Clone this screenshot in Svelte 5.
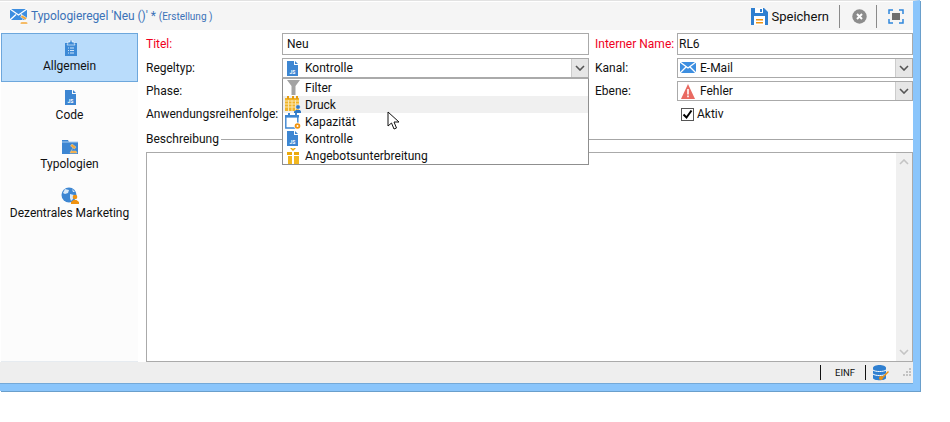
<script>
	let navItems = [
		{ label: "Allgemein", icon: "clip", active: true },
		{ label: "Code", icon: "js" },
		{ label: "Typologien", icon: "folder" },
		{ label: "Dezentrales Marketing", icon: "globe" }
	];
	let options = [
		{ label: "Filter", icon: "filter" },
		{ label: "Druck", icon: "calperson", hover: true },
		{ label: "Kapazität", icon: "calgear" },
		{ label: "Kontrolle", icon: "js" },
		{ label: "Angebotsunterbreitung", icon: "gift" }
	];
</script>

{#snippet icon(name)}
	<svg class="icon" width="18" height="17" viewBox="0 0 18 17">
		{#if name === "clip"}
			<path d="M4 3h12v13H4z" fill="#3d8ad6" />
			<path d="M7 3V2h2V0h2v2h2v1l1 2H6z" fill="#3d8ad6" stroke="#fff" stroke-width=".6" />
			<path d="M7 8h1M9 8h4M7 10.500h1M9 10.500h4M7 13h1M9 13h4" stroke="#cfe4f8" stroke-width="1" />
		{:else if name === "js"}
			<path d="M4 1h7v4h4v11H4z" fill="#3d86d2" />
			<path d="M12 1l3 3h-3z" fill="#3d86d2" />
			<text x="6.500" y="14" class="js">JS</text>
		{:else if name === "folder"}
			<path d="M1 2h6l1 2h9v12H1z" fill="#3d86d2" />
			<path d="M1 4h16" stroke="#a9cdf0" stroke-width="1" />
			<path d="M9 15h7l-1-2h-5zM11 6l4 3-1.500 2-4-3zM12 10l-2 3" fill="#f2a535" stroke="#f7d7a0" stroke-width=".5" />
		{:else if name === "globe"}
			<circle cx="8" cy="8" r="7.500" fill="#3d86d2" />
			<path d="M4 2l4 1-1 3-3 1-2-1zM9 7l4 1-1 4-2 2-1-3zM11 2l3 3-2 0z" fill="#d9e9f8" />
			<circle cx="14" cy="10" r="2.300" fill="#f0920f" />
			<path d="M10 17v-2l2.500-2h3l2.500 2v2z" fill="#f0920f" />
		{:else if name === "filter"}
			<path d="M4 1h13l-4.500 6v9h-4V7z" fill="#a3a3a3" />
		{:else if name === "calperson"}
			<path d="M2 2h14v13H2z" fill="#f0b429" />
			<path d="M4 0h2v3H4zM9 0h2v3H9zM13 0h2v3h-2z" fill="#e49b12" />
			<path d="M2 5h14M2 8h14M2 11h14M5.500 4v11M9 4v11M12.500 4v11" stroke="#fbe6ae" stroke-width="1" />
			<circle cx="15" cy="11" r="2.300" fill="#2f78c4" stroke="#fff" stroke-width=".5" />
			<path d="M11 17v-1.500l2-1.500h4l1 1.500V17z" fill="#2f78c4" />
		{:else if name === "calgear"}
			<path d="M2.800 3.500h12V15h-12z" fill="#fff" stroke="#3d86d2" stroke-width="1.400" />
			<path d="M2 2h14v2.500H2z" fill="#3d86d2" />
			<path d="M5 0h2v3H5zM12 0h2v3h-2z" fill="#3d86d2" />
			<circle cx="14.500" cy="13" r="3.400" fill="#fff" />
			<circle cx="14.500" cy="13" r="2.800" fill="#f0920f" />
			<circle cx="14.500" cy="13" r="1" fill="#fff" />
		{:else if name === "gift"}
			<path d="M5 8h11v9H5z" fill="#f2b71f" />
			<path d="M4 5h12v3H4z" fill="#eba90d" />
			<path d="M9 5h2v12H9z" fill="#fff" />
			<path d="M4 8.500h12" stroke="#fff" />
			<path d="M10 4L7 1h2l1 1 1-1h2z" fill="#eba90d" />
		{:else if name === "mail"}
			<path d="M2 2h16v11H2z" fill="#3d8ee0" />
			<path d="M2 2l8 6 8-6M2 13l6-6M18 13l-6-6" fill="none" stroke="#fff" stroke-width="1.300" />
		{:else if name === "warn"}
			<path d="M10 1L17 16H3z" fill="#e96a62" />
			<path d="M9.200 6h1.600v5.500H9.200zM9.200 12.500h1.600v1.800H9.200z" fill="#fff" />
		{/if}
	</svg>
{/snippet}

<div class="page">
	<div class="window">
		<header class="titlebar">
			<div class="caption">
				<svg width="20" height="17" viewBox="0 0 20 17">
					<path d="M0 1h17v11H0z" fill="#3d8ee0" />
					<path d="M0 1l8.500 6L17 1M0 12l6-5.500M17 12l-6-5.500" fill="none" stroke="#fff" stroke-width="1.300" />
					<path d="M10 16h8l-1-2h-6zM12 7l5 3-1.500 2-5-3zM13 11l-3 3" fill="#f2a535" stroke="#fff" stroke-width=".5" />
				</svg>
				<span class="name">Typologieregel 'Neu ()' *</span>
				<span class="state">(Erstellung )</span>
			</div>
			<div class="tools">
				<svg class="floppy" width="17" height="17" viewBox="0 0 17 17">
					<path d="M0 0h13l4 4v13H0z" fill="#2f7fd0" />
					<path d="M4 0h8v5H4z" fill="#fff" />
					<path d="M9 1h2v3H9z" fill="#2f7fd0" />
					<path d="M3 8h11v9H3z" fill="#fff" />
					<path d="M5 11h7v1.500H5zM5 14h7v1.500H5z" fill="#f0920f" />
				</svg>
				<span class="save">Speichern</span>
				<i class="sep first"></i>
				<svg class="cancel" width="15" height="15" viewBox="0 0 15 15">
					<circle cx="7.500" cy="7.500" r="7.200" fill="#8c8c8c" />
					<path d="M5 5l5 5M10 5l-5 5" stroke="#fff" stroke-width="2" />
				</svg>
				<i class="sep"></i>
				<svg class="full" width="16" height="15" viewBox="0 0 16 15">
					<path d="M1 5V1h4M11 1h4v4M15 10v4h-4M5 14H1v-4" fill="none" stroke="#2f86dc" stroke-width="1.500" />
					<path d="M4 4h8v7H4z" fill="#6e6e6e" />
				</svg>
			</div>
		</header>

		<div class="body">
			<nav class="sidebar">
				{#each navItems as item}
					<div class="navitem" class:active={item.active}>
						{@render icon(item.icon)}
						<span>{item.label}</span>
					</div>
				{/each}
			</nav>

			<main class="content">
				<div class="form">
					<span class="req">Titel:</span>
					<div class="input tall">Neu</div>
					<span class="req second">Interner Name:</span>
					<div class="input tall rl">RL6</div>

					<span>Regeltyp:</span>
					<div class="combo-wrap">
						<div class="input combo">
							{@render icon("js")}
							<span class="val">Kontrolle</span>
							<b class="arrow"><svg width="10" height="6" viewBox="0 0 10 6"><path d="M1 1l4 4 4-4" fill="none" stroke="#555" stroke-width="1.600" /></svg></b>
						</div>
						<ul class="dropdown">
							{#each options as opt}
								<li class:hover={opt.hover}>
									{@render icon(opt.icon)}
									<span>{opt.label}</span>
								</li>
							{/each}
						</ul>
					</div>
					<span class="second">Kanal:</span>
					<div class="input combo">
						{@render icon("mail")}
						<span class="val">E-Mail</span>
						<b class="arrow"><svg width="10" height="6" viewBox="0 0 10 6"><path d="M1 1l4 4 4-4" fill="none" stroke="#555" stroke-width="1.600" /></svg></b>
					</div>

					<span>Phase:</span>
					<div></div>
					<span class="second">Ebene:</span>
					<div class="input combo">
						{@render icon("warn")}
						<span class="val">Fehler</span>
						<b class="arrow"><svg width="10" height="6" viewBox="0 0 10 6"><path d="M1 1l4 4 4-4" fill="none" stroke="#555" stroke-width="1.600" /></svg></b>
					</div>

					<span>Anwendungsreihenfolge:</span>
					<div></div>
					<span></span>
					<label class="check">
						<i class="box"><svg width="11" height="11" viewBox="0 0 11 11"><path d="M1.500 5.500l3 3 5-7" fill="none" stroke="#000" stroke-width="2" /></svg></i>
						Aktiv
					</label>
				</div>

				<div class="legend"><span>Beschreibung</span><i></i></div>
				<div class="descr">
					<div class="scroll">
						<svg width="10" height="6" viewBox="0 0 10 6"><path d="M1 5l4-4 4 4" fill="none" stroke="#c4c4c4" stroke-width="1.600" /></svg>
						<svg width="10" height="6" viewBox="0 0 10 6"><path d="M1 1l4 4 4-4" fill="none" stroke="#c4c4c4" stroke-width="1.600" /></svg>
					</div>
				</div>
			</main>
		</div>

		<footer class="status">
			<i class="bar"></i>
			<span class="einf">EINF</span>
			<i class="bar"></i>
			<svg class="db" width="16" height="16" viewBox="0 0 16 16">
				<path d="M0 3c0-4 13-4 13 0v10c0 3-13 3-13 0z" fill="#2f7fd0" />
				<path d="M0 5c2 2 11 2 13 0M0 9c2 2 11 2 13 0" fill="none" stroke="#fff" stroke-width="1" />
				<circle cx="8" cy="13" r="2" fill="#f0920f" />
				<path d="M9 12l6-6 1 1-6 6z" fill="#f0920f" />
			</svg>
			<svg class="grip" width="10" height="9" viewBox="0 0 10 9">
				<path d="M7 0h2v2H7zM4 3h2v2H4zM7 3h2v2H7zM1 6h2v2H1zM4 6h2v2H4zM7 6h2v2H7z" fill="#c2c2c2" />
			</svg>
		</footer>
	</div>

	<svg class="cursor" width="14" height="20" viewBox="0 0 14 20">
		<path d="M1 1v14l3.500-3 2.500 6 2.500-1-2.500-6h5z" fill="#fff" stroke="#111" stroke-width="1" />
	</svg>
</div>

<style>
	:global(body) {
		margin: 0;
		background: #fff;
	}
	.page {
		position: relative;
		width: 950px;
		height: 422px;
		overflow: hidden;
		font-family: Roboto, "Noto Sans", sans-serif;
		font-size: 12px;
		color: #111;
	}
	.window {
		width: 913px;
		height: 383px;
		display: flex;
		flex-direction: column;
		background: #fff;
		border-right: 7px solid #8ac5fb;
		border-bottom: 7px solid #8ac5fb;
		box-shadow: 1px 1px 0 #6a9fcb;
		border-top: 1px solid #e2e2e2;
	}
	.titlebar {
		height: 28px;
		margin-top: 1px;
		flex: none;
		display: flex;
		align-items: center;
		justify-content: space-between;
		background: #f5f5f5;
		padding-left: 10px;
	}
	.caption {
		display: flex;
		align-items: center;
		color: #3b72b8;
	}
	.name {
		margin-left: 1px;
		letter-spacing: -0.06px;
	}
	.state {
		font-size: 10px;
		margin-left: 3px;
	}
	.tools {
		display: flex;
		align-items: center;
		height: 23px;
		padding-right: 9px;
	}
	.save {
		font-size: 13px;
		margin-left: 3px;
	}
	.sep {
		width: 1px;
		height: 23px;
		background: #8a8a8a;
		margin: 0 9px 0 9px;
	}
	.sep.first {
		margin-left: 10px;
		margin-right: 12px;
	}
	.full {
		margin-left: 2px;
	}
	.body {
		flex: 1;
		display: flex;
		min-height: 0;
	}
	.sidebar {
		width: 137px;
		margin-left: 1px;
		padding-top: 3px;
		background: #fcfcfc;
		flex: none;
		box-sizing: border-box;
		border-bottom: 1px solid #e6ebf0;
	}
	.navitem {
		height: 49px;
		display: flex;
		flex-direction: column;
		align-items: center;
		padding-top: 6px;
		box-sizing: border-box;
		border: 1px solid transparent;
		gap: 2px;
	}
	.navitem.active {
		background: #b9dcfb;
		border-color: #6da7dc;
	}
	.content {
		flex: 1;
		padding: 3px 0 0 8px;
		min-width: 0;
		display: flex;
		flex-direction: column;
	}
	.form {
		display: grid;
		grid-template-columns: 136px 307px 88px 236px;
		grid-template-rows: 22px 20px 20px 20px;
		row-gap: 3px;
		align-items: center;
		white-space: nowrap;
	}
	.second {
		padding-left: 6px;
	}
	.req {
		color: #f0001e;
	}
	.input {
		box-sizing: border-box;
		height: 20px;
		border: 1px solid #aaa;
		background: #fff;
		display: flex;
		align-items: center;
		padding-left: 4px;
	}
	.input.tall {
		height: 22px;
	}
	.input.rl {
		padding-left: 1px;
	}
	.combo {
		padding-left: 0;
		position: relative;
	}
	.val {
		margin-left: 4px;
		flex: 1;
	}
	.arrow {
		width: 16px;
		align-self: stretch;
		background: #e6e6e6;
		border-left: 1px solid #ccc;
		display: flex;
		align-items: center;
		justify-content: center;
	}
	.combo-wrap {
		position: relative;
	}
	.dropdown {
		position: absolute;
		z-index: 2;
		top: 100%;
		left: 0;
		right: 0;
		margin: 0;
		padding: 0;
		list-style: none;
		background: #fff;
		border: 1px solid #8f8f8f;
		border-top-color: #aaa;
	}
	.dropdown li {
		height: 17px;
		display: flex;
		align-items: center;
		gap: 4px;
	}
	.dropdown li.hover {
		background: #f0f0f0;
	}
	.js {
		font-size: 5px;
		font-weight: 700;
		fill: #fff;
	}
	.check {
		display: flex;
		align-items: center;
		gap: 3px;
		padding-left: 4px;
	}
	.box {
		width: 11px;
		height: 11px;
		border: 1px solid #555;
		display: flex;
	}
	.legend {
		height: 18px;
		margin-top: 6px;
		display: flex;
		align-items: center;
		gap: 2px;
	}
	.legend i {
		flex: 1;
		height: 1px;
		background: #a6a6a6;
	}
	.descr {
		flex: 1;
		margin-top: 4px;
		border: 1px solid #aaa;
		display: flex;
		justify-content: flex-end;
	}
	.scroll {
		width: 16px;
		background: #f0f0f0;
		display: flex;
		flex-direction: column;
		justify-content: space-between;
		align-items: center;
		padding: 6px 0;
		box-sizing: border-box;
	}
	.status {
		height: 21px;
		flex: none;
		background: #eee;
		border-bottom: 1px solid #74a9d8;
		display: flex;
		align-items: center;
		justify-content: flex-end;
		font-size: 9.5px;
		padding-right: 1px;
	}
	.bar {
		width: 1px;
		height: 15px;
		background: #111;
	}
	.einf {
		margin: 0 10px 0 14px;
	}
	.db {
		margin: 0 13px 0 7px;
	}
	.cursor {
		position: absolute;
		left: 387px;
		top: 111px;
		z-index: 3;
	}
</style>
